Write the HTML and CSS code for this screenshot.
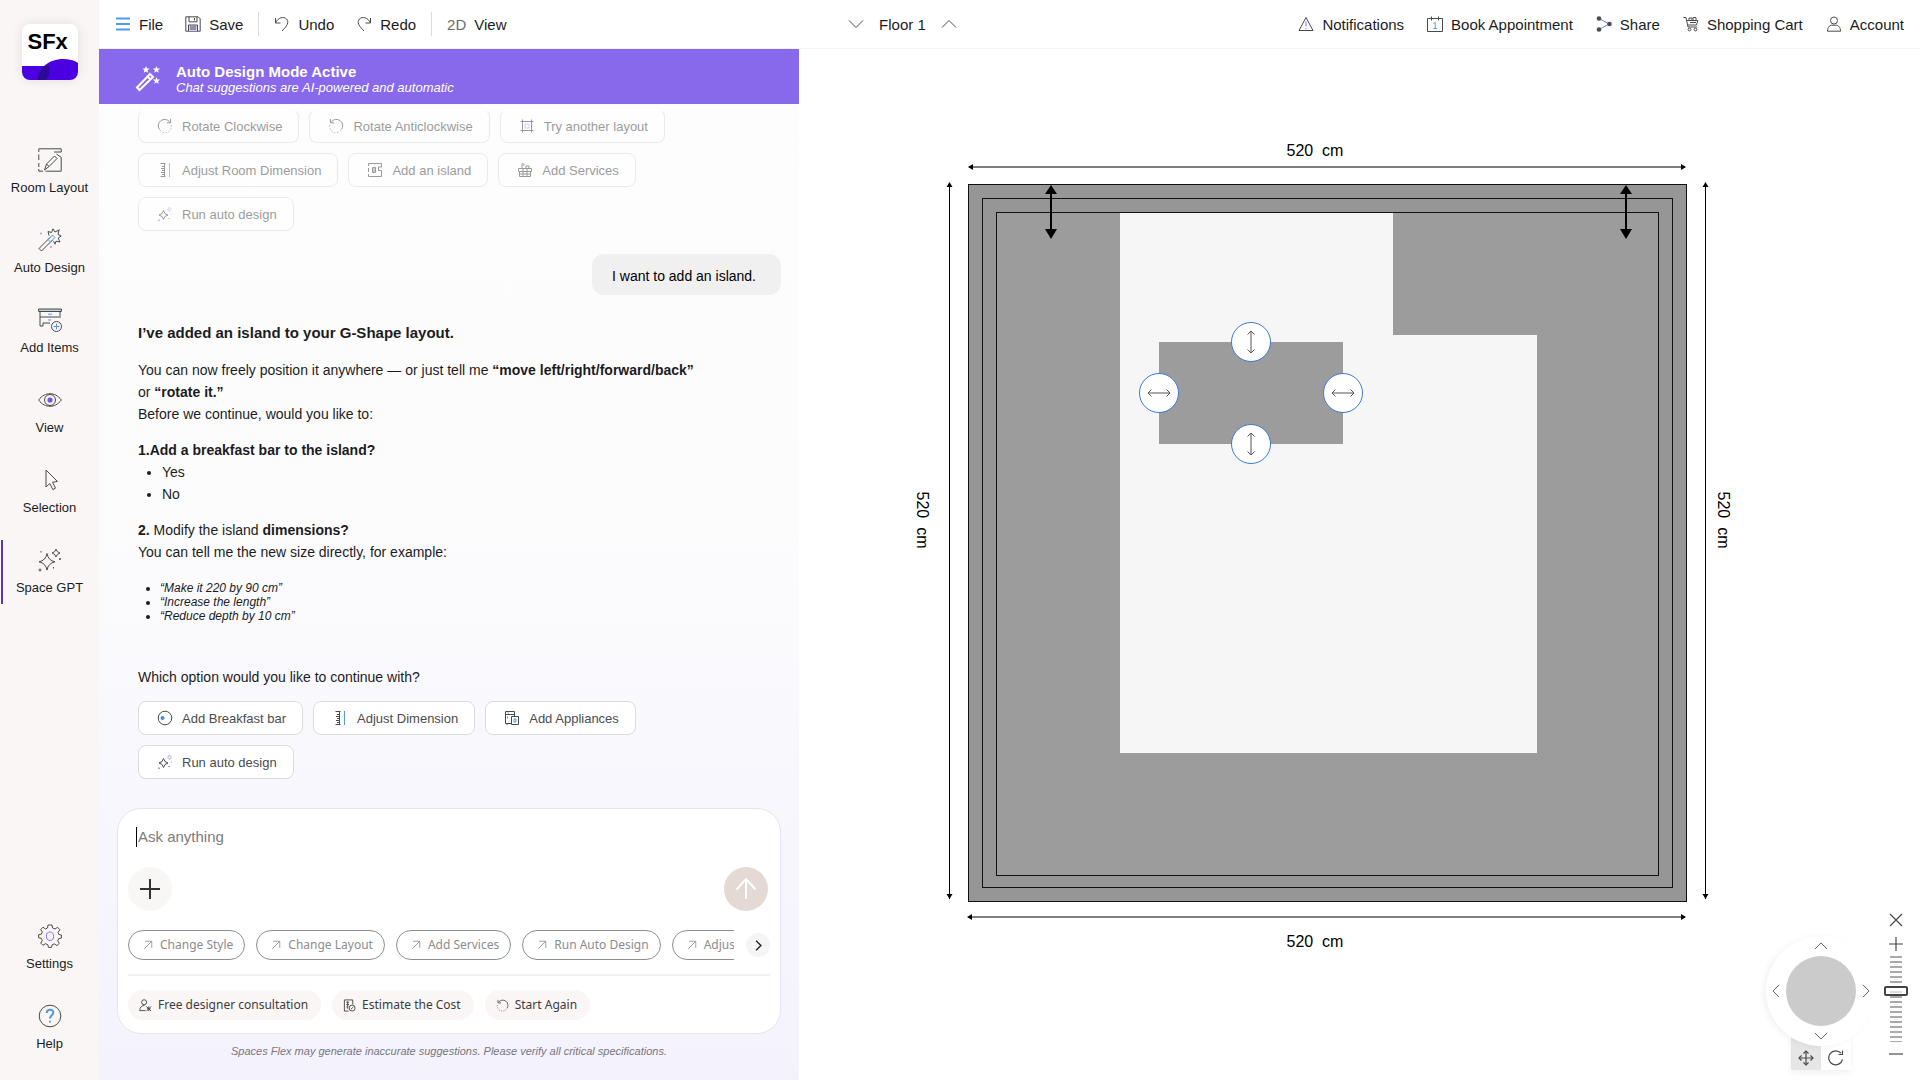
FILE: index.html
```html
<!DOCTYPE html>
<html lang="en">
<head>
<meta charset="utf-8">
<meta name="viewport" content="width=device-width, initial-scale=1">
<title>Spaces Flex – Space GPT</title>
<link rel="stylesheet" href="styles.css">
</head>
<body>
<svg class="sprite" aria-hidden="true">
  <symbol id="i-rot-cw" viewBox="0 0 16 16"><path d="M2.5 11.5A6.3 6.3 0 0 1 12.8 4"/><path d="M13.6 1v3.8H9.8"/><path d="M14.3 7.5A6.3 6.3 0 0 1 3 12.2" stroke-dasharray="1 2"/></symbol>
  <symbol id="i-rot-ccw" viewBox="0 0 16 16"><path d="M13.5 11.5A6.3 6.3 0 0 0 3.2 4"/><path d="M2.4 1v3.8h3.8"/><path d="M1.7 7.5A6.3 6.3 0 0 0 13 12.2" stroke-dasharray="1 2"/></symbol>
  <symbol id="i-frame" viewBox="0 0 16 16"><path d="M3.5 1.5v13M12.5 1.5v13M1.5 3.5h13M1.5 12.5h13"/><path class="lilac" d="M6 6h4v4H6z"/></symbol>
  <symbol id="i-ruler" viewBox="0 0 16 16"><path d="M3.5 1.5h5M3.5 14.5h5M7.500 1.5v13M5 4.500h3M4 6.500h4M5 8.500h3M4 10.500h4M5 12.500h3"/><path class="blue" d="M12.500 1v14"/></symbol>
  <symbol id="i-island" viewBox="0 0 16 16"><path d="M1.5 4V1.5h13V5h-3v3.5h3v6h-13V12M1.5 6v4"/><path d="M5.5 5.5h3v5h-3zM7 5.500v5"/></symbol>
  <symbol id="i-gift" viewBox="0 0 16 16"><path d="M1.500 6.500h13v3h-13zM2.500 9.500h11v5h-11zM6 6.500v8M10 6.500v8M2.500 12h11M5 6V2.500a1 1 0 0 1 2 0V4M9 6V4h3v2"/></symbol>
  <symbol id="i-spark" viewBox="0 0 16 16"><path d="M6.500 4.500Q7.200 8.300 11 9 7.200 9.700 6.500 13.500 5.800 9.700 2 9 5.800 8.300 6.500 4.500z"/><path class="lilac" d="M12.500 1q.4 1.900 2 2.300-1.600.4-2 2.300-.4-1.900-2-2.300 1.600-.4 2-2.300zM14.500 7.500v1"/><path d="M2 13.500v1.500M12 12v1"/></symbol>
  <symbol id="i-bar" viewBox="0 0 16 16"><circle cx="8" cy="8" r="6.800"/><circle class="bluefill" cx="5.500" cy="8" r="2"/></symbol>
  <symbol id="i-appl" viewBox="0 0 16 16"><path d="M7 13.500H1.500V1.500h9V6M1.500 4.500h9M3 13v2"/><path d="M7.500 6.500h7v8h-7z"/><path class="blue" d="M3.500 3h1.500M3.500 6.500v2M10 9h2v3h-2z"/></symbol>
  <symbol id="i-ne" viewBox="0 0 12 12"><path d="M1.500 10.500l9-9M2.500 1.500h8v8"/></symbol>
  <symbol id="i-warn" viewBox="0 0 16 16"><path d="M8 1.500l7 13H1z"/><path class="violet" d="M8 5.500v5M8 12v1.200"/></symbol>
  <symbol id="i-cal" viewBox="0 0 16 16"><path d="M.5 2.500h15v13H.500zM4.500 .500v4M11.500 .500v4"/><path class="blue" d="M6.500 7.500l1.700-1v6M6.300 12.500h3.700"/></symbol>
  <symbol id="i-share" viewBox="0 0 16 16"><path class="violet" d="M3 2.500l10 5.500"/><path class="blue" d="M13 8L3 13.500"/><g class="dots"><circle cx="3" cy="2.500" r="2.300"/><circle cx="13.500" cy="8" r="2.300"/><circle cx="3" cy="13.500" r="2.300"/></g></symbol>
  <symbol id="i-cart" viewBox="0 0 16 16"><path d="M.5 1.500h2.500l2 9.500h9M3.800 4.500h11L13.500 9H4.800M6 4V2h3v2M10 4V1.500h3V4M7 6.500h6"/><circle cx="6.500" cy="13.500" r="1.400"/><circle cx="12.500" cy="13.500" r="1.400"/></symbol>
  <symbol id="i-user" viewBox="0 0 16 16"><circle cx="8" cy="4.500" r="3.500"/><path d="M1.500 15.200c0-4 2-5.700 4.200-6h4.600c2.200.3 4.200 2 4.200 6z"/></symbol>
  <symbol id="i-save" viewBox="0 0 16 16"><path d="M.8 .8h12.400l2 2v12.400H.800z"/><path class="lilacfill" d="M3.500 9h9v6h-9z"/><path d="M3.500 15V9h9v6M4 .8v5h8v-5M9.500 2v2.500M5 11h6M5 13h6"/></symbol>
  <symbol id="i-undo" viewBox="0 0 16 16"><path d="M1.500 2v5h5M1.500 7C4 1.500 9.500 0 12.500 3c3 3.300.5 7-4.500 12"/></symbol>
  <symbol id="i-redo" viewBox="0 0 16 16"><path d="M14.500 2v5h-5M14.500 7C12 1.500 6.500 0 3.500 3c-3 3.300-.5 7 4.500 12"/></symbol>
  <symbol id="i-down" viewBox="0 0 16 16"><path d="M1 4.500l7 7 7-7"/></symbol>
  <symbol id="i-up" viewBox="0 0 16 16"><path d="M1 11.500l7-7 7 7"/></symbol>
  <symbol id="i-left" viewBox="0 0 16 16"><path d="M11.500 1l-7 7 7 7"/></symbol>
  <symbol id="i-right" viewBox="0 0 16 16"><path d="M4.500 1l7 7-7 7"/></symbol>
  <symbol id="i-ns" viewBox="0 0 24 24"><path d="M12 1v22M8.500 4.500L12 1l3.500 3.500M8.500 19.500L12 23l3.500-3.500"/></symbol>
  <symbol id="i-ew" viewBox="0 0 24 24"><path d="M1 12h22M4.500 8.500L1 12l3.500 3.500M19.500 8.500L23 12l-3.500 3.500"/></symbol>
</svg>

<div class="app">
  <nav class="rail" aria-label="Tools">
    <a class="logo" href="#" aria-label="SFx home">
      <svg viewBox="0 0 56 56" aria-hidden="true"><path fill="#4a00e0" d="M0 42h22c6-5 12-7 19-7 6 0 11 1 15 4v17H0z"/><path fill="#2c0a96" d="M22 42h5c1 5 0 10-3 14h-8c0-6 2-10 6-14z"/></svg>
      <span class="logo-text">SFx</span>
    </a>
    <div class="rail-main">
      <a class="rail-item" href="#"><svg class="ic24" viewBox="0 0 24 24"><path d="M.8 4V.800h22.400V4H16M.800 6.500V12M.800 15v4M.800 21v2.200H5M7.500 23.200h15.700V9.500L18.500 6"/><path d="M6.500 22l2-6 8-8 2.500 2.500-8 8zM8.500 16l2.500 2.500"/></svg>Room Layout</a>
      <a class="rail-item" href="#"><svg class="ic24" viewBox="0 0 24 24"><path d="M12 9.500L1 20.500 3.500 23 14.500 12"/><path class="blue" d="M10 11.500l4.500-4.500 2.500 2.500-4.500 4.500z"/><path d="M11 7.500l-1-4 3.500 1L15 .800l2 3.200 4-2-1 4.500 3.200 1.500-3 2 1.800 4-4-.8-1 3-1.500-3"/><path class="pink" d="M3 4.500v2M2 5.500h2M21.500 1v2M13 18v2M12 19h2"/></svg>Auto Design</a>
      <a class="rail-item" href="#"><svg class="ic24" viewBox="0 0 24 24"><path fill="#b9d2dc" d="M.6 1h22.800v2.500H.600z"/><path d="M2 3.500V18h3v-3h7M22 3.500V10M2 9h19"/><path class="blue" d="M10 6.200h4M10 12h3M18.500 15.500v6M15.500 18.500h6"/><circle cx="18.500" cy="18.500" r="5"/></svg>Add Items</a>
      <a class="rail-item" href="#"><svg class="ic24" viewBox="0 0 24 24"><path d="M.6 12C4 7.500 8 5.700 12 5.700S20 7.500 23.400 12C20 16.500 16 18.300 12 18.300S4 16.500.600 12z"/><circle cx="12" cy="12" r="5.500"/><circle cx="12" cy="12" r="2.600" fill="#6a5be0" stroke="none"/></svg>View</a>
      <a class="rail-item" href="#"><svg class="ic24" viewBox="0 0 24 24"><path d="M8 2v17l3.800-3.500 3 6 2.700-1.300-3-6L19.500 13.500z"/></svg>Selection</a>
      <a class="rail-item rail-item-active" href="#" aria-current="page"><svg class="ic24" viewBox="0 0 24 24"><path d="M9 5.500q1.200 7 8 8.300-6.800 1.300-8 8.300-1.200-7-8-8.300 6.800-1.300 8-8.300zM18 1q.7 3.300 4 4-3.300.7-4 4-.7-3.300-4-4 3.300-.7 4-4z"/><path d="M3 3v1.500M22 10v2M21 11h2M2 20.500v3M.5 22h3M15.500 19v1.500"/></svg>Space GPT</a>
    </div>
    <div class="rail-foot">
      <a class="rail-item" href="#"><svg class="ic24" viewBox="0 0 24 24"><path d="M10 1h4l.6 3 2.400 1 2.600-1.700 2.200 2.400L20 8.500l.9 2 2.500.5v3l-2.700.6-1 2.200 1.600 2.600-2.300 2.200-2.600-1.700-2.300 1L13.500 23.400h-3l-.7-2.700-2.300-1-2.600 1.600-2.200-2.200 1.600-2.600-1-2.200L.6 13.800v-3l2.800-.6.9-2.200L2.700 5.500 5 3.200 7.500 5l2-1z"/><ellipse class="violet" cx="12" cy="12.200" rx="3.600" ry="4.200"/></svg>Settings</a>
      <a class="rail-item" href="#"><svg class="ic24" viewBox="0 0 24 24"><circle cx="12" cy="12" r="10.800"/><path class="blue thick" d="M8.800 9c0-4.500 6.500-4.300 6.500-.5 0 3-3.300 3-3.300 6M12 16.800v1.800"/></svg>Help</a>
    </div>
  </nav>

  <header class="topbar">
    <div class="bar-group">
      <button class="bar-btn"><svg class="ic16" viewBox="0 0 16 16"><path class="blue thick" d="M1 2.500h14M1 8h14M1 13.500h14"/></svg>File</button>
      <button class="bar-btn"><svg class="ic16"><use href="#i-save"/></svg>Save</button>
      <span class="bar-sep"></span>
      <button class="bar-btn"><svg class="ic16"><use href="#i-undo"/></svg>Undo</button>
      <button class="bar-btn"><svg class="ic16"><use href="#i-redo"/></svg>Redo</button>
      <span class="bar-sep"></span>
      <button class="bar-btn"><span class="mode">2D</span>View</button>
    </div>
    <div class="floors">
      <button class="bar-btn" aria-label="Floor down"><svg class="ic16"><use href="#i-down"/></svg></button>
      <span>Floor 1</span>
      <button class="bar-btn" aria-label="Floor up"><svg class="ic16"><use href="#i-up"/></svg></button>
    </div>
    <div class="bar-group bar-group-end">
      <button class="bar-btn"><svg class="ic16"><use href="#i-warn"/></svg>Notifications</button>
      <button class="bar-btn"><svg class="ic16"><use href="#i-cal"/></svg>Book Appointment</button>
      <button class="bar-btn"><svg class="ic16"><use href="#i-share"/></svg>Share</button>
      <button class="bar-btn"><svg class="ic16"><use href="#i-cart"/></svg>Shopping Cart</button>
      <button class="bar-btn"><svg class="ic16"><use href="#i-user"/></svg>Account</button>
    </div>
  </header>

  <section class="chat" aria-label="Space GPT">
    <div class="banner">
      <svg class="banner-icon" viewBox="0 0 26 26"><path d="M15 8L2 21.500 4.500 24 18 11z"/><path d="M12.500 10.500l3 3"/><g class="stars"><path d="M11 0l1 2.400 2.600.2-2 1.700.6 2.500L11 5.400 8.800 6.800l.6-2.500-2-1.700 2.600-.2z"/><path d="M21.500 0l1 2.400 2.600.2-2 1.700.6 2.500-2.200-1.400-2.200 1.400.6-2.500-2-1.700 2.600-.2z"/><path d="M21.500 11l1 2.400 2.600.2-2 1.700.6 2.500-2.200-1.400-2.200 1.400.6-2.500-2-1.700 2.600-.2z"/></g></svg>
      <div>
        <h1>Auto Design Mode Active</h1>
        <p>Chat suggestions are AI-powered and automatic</p>
      </div>
    </div>

    <div class="thread">
      <div class="chips chips-past">
        <button class="chip"><svg class="ic16"><use href="#i-rot-cw"/></svg>Rotate Clockwise</button>
        <button class="chip"><svg class="ic16"><use href="#i-rot-ccw"/></svg>Rotate Anticlockwise</button>
        <button class="chip"><svg class="ic16"><use href="#i-frame"/></svg>Try another layout</button>
        <button class="chip"><svg class="ic16"><use href="#i-ruler"/></svg>Adjust Room Dimension</button>
        <button class="chip"><svg class="ic16"><use href="#i-island"/></svg>Add an island</button>
        <button class="chip"><svg class="ic16"><use href="#i-gift"/></svg>Add Services</button>
        <button class="chip"><svg class="ic16"><use href="#i-spark"/></svg>Run auto design</button>
      </div>
      <p class="bubble">I want to add an island.</p>
      <article class="reply">
        <h2>I’ve added an island to your G-Shape layout.</h2>
        <p>You can now freely position it anywhere — or just tell me <b>“move left/right/forward/back”</b><br>or <b>“rotate it.”</b><br>Before we continue, would you like to:</p>
        <p class="next"><b>1.Add a breakfast bar to the island?</b></p>
        <ul>
          <li>Yes</li>
          <li>No</li>
        </ul>
        <p class="next"><b>2.</b> Modify the island <b>dimensions?</b><br>You can tell me the new size directly, for example:</p>
        <ul class="examples">
          <li>“Make it 220 by 90 cm”</li>
          <li>“Increase the length”</li>
          <li>“Reduce depth by 10 cm”</li>
        </ul>
        <p class="question">Which option would you like to continue with?</p>
      </article>
      <div class="chips">
        <button class="chip"><svg class="ic16"><use href="#i-bar"/></svg>Add Breakfast bar</button>
        <button class="chip"><svg class="ic16"><use href="#i-ruler"/></svg>Adjust Dimension</button>
        <button class="chip"><svg class="ic16"><use href="#i-appl"/></svg>Add Appliances</button>
        <button class="chip"><svg class="ic16"><use href="#i-spark"/></svg>Run auto design</button>
      </div>
    </div>

    <form class="composer">
      <label class="field"><span class="caret"></span><input type="text" placeholder="Ask anything" aria-label="Ask anything"></label>
      <div class="composer-row">
        <button type="button" class="round" aria-label="Attach"><svg viewBox="0 0 22 22"><path d="M11 1v20M1 11h20"/></svg></button>
        <button type="button" class="round send" aria-label="Send"><svg viewBox="0 0 22 22"><path d="M11 1v20M1.500 11.500L11 1l9.500 10.500"/></svg></button>
      </div>
      <div class="pill-row">
        <div class="pills">
          <button type="button" class="pill"><svg><use href="#i-ne"/></svg>Change Style</button>
          <button type="button" class="pill"><svg><use href="#i-ne"/></svg>Change Layout</button>
          <button type="button" class="pill"><svg><use href="#i-ne"/></svg>Add Services</button>
          <button type="button" class="pill"><svg><use href="#i-ne"/></svg>Run Auto Design</button>
          <button type="button" class="pill"><svg><use href="#i-ne"/></svg>Adjust Dimension</button>
        </div>
        <button type="button" class="more" aria-label="More suggestions"><svg><use href="#i-right"/></svg></button>
      </div>
      <div class="actions">
        <button type="button" class="action"><svg viewBox="0 0 14 14"><circle cx="5.500" cy="3.500" r="2.700"/><path d="M7 12.500H.800c0-3.500 2-5.500 5-5.500M8 8l5 5M13 8l-5 5M8.500 10.500h4M10.500 8v5"/></svg>Free designer consultation</button>
        <button type="button" class="action"><svg viewBox="0 0 14 14"><path d="M6 13H1.500V1h9v5M3.500 3.500h3M3.500 6h3M3.500 8.500h1.500M5 2.500v8"/><circle cx="9.800" cy="9.800" r="3.200"/><path d="M8.500 11l2.600-2.400"/></svg>Estimate the Cost</button>
        <button type="button" class="action"><svg><use href="#i-rot-ccw"/></svg>Start Again</button>
      </div>
    </form>
    <p class="note">Spaces Flex may generate inaccurate suggestions. Please verify all critical specifications.</p>
  </section>

  <main class="canvas">
    <div class="plan">
      <svg class="plan-art" viewBox="915 140 820 815" role="img" aria-label="Room plan, 520 by 520 cm">
        <rect x="968" y="184" width="719" height="718" fill="#969696"/>
        <rect x="996" y="212" width="663" height="664" fill="#9c9c9c"/>
        <path fill="#f6f6f6" d="M1120 212h273v123h144v418h-417z"/>
        <rect x="1159" y="342" width="184" height="102" fill="#9c9c9c"/>
        <g fill="none" stroke="#111" shape-rendering="crispEdges">
          <rect x="968.500" y="184.500" width="718" height="717"/>
          <rect x="982.500" y="198.500" width="690" height="689"/>
          <rect x="996.500" y="212.500" width="662" height="663"/>
        </g>
        <g stroke="#000" fill="#000">
          <path d="M969 167h716M969 917h716M949.500 183v716M1705.500 183v716" fill="none"/>
          <path stroke="none" d="M968 167l5-3v6zM1686 167l-5-3v6zM967 917l5-3v6zM1686 917l-5-3v6zM949.500 182l-3 5h6zM949.500 899l-3-5h6zM1705.500 182l-3 5h6zM1705.500 899l-3-5h6z"/>
          <path stroke-width="2" d="M1051 192v40M1626 192v40"/>
          <path stroke="none" d="M1051 185l-6 9h12zM1051 239l-6-10h12zM1626 185l-6 9h12zM1626 239l-6-10h12z"/>
        </g>
        <g class="dim" text-anchor="middle">
          <text x="1315" y="156">520&#160; cm</text>
          <text x="1315" y="947">520&#160; cm</text>
          <text transform="translate(917 520) rotate(90)">520&#160; cm</text>
          <text transform="translate(1718 520) rotate(90)">520&#160; cm</text>
        </g>
      </svg>
      <button class="handle handle-n" aria-label="Resize from back"><svg><use href="#i-ns"/></svg></button>
      <button class="handle handle-s" aria-label="Resize from front"><svg><use href="#i-ns"/></svg></button>
      <button class="handle handle-w" aria-label="Resize from left"><svg><use href="#i-ew"/></svg></button>
      <button class="handle handle-e" aria-label="Resize from right"><svg><use href="#i-ew"/></svg></button>
    </div>

    <div class="view-controls">
      <div class="pan">
        <div class="dial">
          <button class="dial-up" aria-label="Pan up"><svg><use href="#i-up"/></svg></button>
          <button class="dial-left" aria-label="Pan left"><svg><use href="#i-left"/></svg></button>
          <span class="knob"></span>
          <button class="dial-right" aria-label="Pan right"><svg><use href="#i-right"/></svg></button>
          <button class="dial-down" aria-label="Pan down"><svg><use href="#i-down"/></svg></button>
        </div>
        <div class="modes">
          <button class="mode-btn mode-on" aria-label="Move"><svg viewBox="0 0 16 16"><path d="M8 1v14M1 8h14"/><path d="M5.500 3.500L8 1l2.500 2.500M5.500 12.500L8 15l2.500-2.500M3.500 5.500L1 8l2.500 2.500M12.500 5.500L15 8l-2.500 2.500"/></svg></button>
          <button class="mode-btn" aria-label="Rotate"><svg viewBox="0 0 16 16"><path d="M14.500 9.500A7 7 0 1 1 13 3.200M14.500.500v4h-4"/></svg></button>
        </div>
      </div>
      <div class="zoom">
        <button class="zoom-close" aria-label="Close"><svg viewBox="0 0 14 14"><path d="M1 1l12 12M13 1L1 13"/></svg></button>
        <button aria-label="Zoom in"><svg viewBox="0 0 14 14"><path d="M7 0v14M0 7h14"/></svg></button>
        <input class="zoom-range" type="range" min="0" max="100" value="60" aria-label="Zoom">
        <button aria-label="Zoom out"><svg viewBox="0 0 14 14"><path d="M0 7h14"/></svg></button>
      </div>
    </div>
  </main>
</div>
</body>
</html>
```

FILE: styles.css
```css
* { box-sizing: border-box; }

body {
  margin: 0;
  font-family: "Liberation Sans", Arial, sans-serif;
  font-size: 14px;
  color: #1c1c1e;
  background: #fff;
}

h1, h2, p, ul { margin: 0; }
a { color: inherit; text-decoration: none; }

button {
  margin: 0;
  padding: 0;
  border: 0;
  background: none;
  font: inherit;
  color: inherit;
  cursor: pointer;
}

svg {
  display: block;
  fill: none;
  stroke: #4a4a4c;
  stroke-width: 1;
}

.sprite { position: absolute; width: 0; height: 0; }
.ic16 { width: 16px; height: 16px; flex: none; }
.ic24 { width: 24px; height: 24px; flex: none; }
.blue { stroke: #4f9bea; }
.violet { stroke: #8a6cf0; }
.lilac { stroke: #b9a8f5; }
.pink { stroke: #d48af0; }
.thick { stroke-width: 2; }
.bluefill { fill: #3f8ee8; stroke: none; }
.lilacfill { fill: #d9d3fb; stroke: none; }
.dots { fill: #4a4a55; stroke: none; }

.app {
  display: grid;
  grid-template-columns: 99px minmax(600px, 700fr) 1121fr;
  grid-template-rows: auto 1fr;
  min-height: 100vh;
}

/* Left rail */
.rail {
  grid-row: 1 / 3;
  display: flex;
  flex-direction: column;
  align-items: stretch;
  padding: 24px 0 20px;
  background: #f9f6f5;
}

.logo {
  display: grid;
  align-self: center;
  width: 56px;
  height: 56px;
  border-radius: 8px;
  overflow: hidden;
  background: #fff;
  box-shadow: 0 0 12px rgba(0, 0, 0, 0.1);
}
.logo > * { grid-area: 1 / 1; }
.logo svg { width: 56px; height: 56px; stroke: none; }
.logo-text {
  padding: 4px 0 0 6px;
  font: bold 22px/28px "Liberation Sans", Arial, sans-serif;
  color: #000;
}

.rail-main, .rail-foot { display: flex; flex-direction: column; gap: 16px; }
.rail-main { margin-top: 60px; }
.rail-foot { margin-top: auto; }

.rail-item {
  display: flex;
  flex-direction: column;
  align-items: center;
  gap: 8px;
  height: 64px;
  margin: 0 1px;
  padding-top: 8px;
  border-left: 2px solid transparent;
  border-right: 2px solid transparent;
  font-size: 13px;
  line-height: 16px;
}
.rail-item-active { border-left-color: #5a35c8; }

/* Top bar */
.topbar {
  grid-column: 2 / 4;
  display: flex;
  align-items: center;
  justify-content: space-between;
  height: 49px;
  padding: 0 16px;
  border-bottom: 1px solid #f3f3f3;
  font-size: 15px;
}
.bar-group { display: flex; align-items: center; gap: 22px; }
.bar-group-end { gap: 23px; }
.bar-btn { display: flex; align-items: center; gap: 8px; white-space: nowrap; }
.bar-sep { width: 1px; height: 24px; margin: 0 -7px; background: #ddd; }
.mode { color: #6b6b6d; }
.floors { display: flex; align-items: center; gap: 15px; }

/* Chat */
.chat {
  display: flex;
  flex-direction: column;
  background: linear-gradient(#fdfdfd 0, #fcfcfd 45%, #f4f2fd 100%);
}

.banner {
  display: flex;
  align-items: center;
  gap: 15px;
  height: 55px;
  padding: 4px 36px 0;
  background: #8869ec;
  color: #fff;
}
.banner-icon { width: 26px; height: 26px; stroke: #fff; stroke-width: 2; }
.stars { fill: #fff; stroke: none; }
.banner h1 { font-size: 15px; line-height: 18px; }
.banner p { font-size: 13px; line-height: 14px; font-style: italic; }

.thread { display: flex; flex-direction: column; padding: 5px 18px 0 39px; }

.chips { display: flex; flex-wrap: wrap; gap: 10px; max-width: 560px; }
.chips-past { opacity: 0.55; }
.chip {
  display: flex;
  align-items: center;
  gap: 9px;
  height: 34px;
  padding: 0 16px 0 18px;
  border: 1px solid #dcdcde;
  border-radius: 8px;
  background: #fff;
  color: #4c4c4e;
  font-size: 13px;
  white-space: nowrap;
}
.chips-past .chip:nth-child(-n+3) {
  border-top-color: transparent;
}

.bubble {
  align-self: flex-end;
  margin-top: 23px;
  padding: 13px 25px 10px 20px;
  border-radius: 12px;
  background: #f0f0f0;
  color: #000;
  line-height: 18px;
}

.reply { margin-top: 27px; line-height: 22px; }
.reply h2 { font-size: 15px; line-height: 22px; margin-bottom: 15px; }
.reply ul { padding-left: 24px; }
.reply .next { margin-top: 14px; }
.reply .examples {
  margin-top: 18px;
  padding-left: 22px;
  font-size: 12px;
  line-height: 14px;
  font-style: italic;
}
.reply .question { margin: 43px 0 13px; }

/* Composer */
.composer {
  margin: auto 18px 0;
  padding: 15px 10px 13px;
  border: 1px solid #e6e4ec;
  border-radius: 24px;
  background: #fff;
}
.field { display: flex; align-items: center; height: 26px; padding-left: 8px; }
.caret { width: 1px; height: 20px; margin-right: 1px; background: #000; }
.field input {
  flex: 1;
  padding: 0;
  border: 0;
  outline: 0;
  background: none;
  font: 15px/20px "Liberation Sans", Arial, sans-serif;
}
.field input::placeholder { color: #7c7c7e; opacity: 1; }

.composer-row { display: flex; justify-content: space-between; margin-top: 17px; }
.round {
  display: grid;
  place-items: center;
  width: 44px;
  height: 44px;
  border-radius: 50%;
  background: #f9f7f6;
}
.round svg { width: 22px; height: 22px; stroke: #333; stroke-width: 2; }
.send { margin-right: 2px; background: #e4dad3; }
.send svg { stroke: #fff; }

.pill-row {
  display: flex;
  align-items: center;
  gap: 12px;
  margin-top: 19px;
  padding-bottom: 14px;
  border-bottom: 2px solid #f2f1f1;
  font: 12px/18px "Noto Sans", sans-serif;
}
.pills { display: flex; flex: 1; gap: 11px; min-width: 0; overflow: hidden; }
.pill {
  display: flex;
  align-items: center;
  gap: 7px;
  flex: none;
  height: 30px;
  padding: 0 11px 0 14px;
  border: 1px solid #8f8f91;
  border-radius: 15px;
  color: #8c8c8e;
}
.pill svg { width: 10px; height: 10px; stroke: #8c8c8e; }
.more {
  display: grid;
  place-items: center;
  width: 24px;
  height: 24px;
  border-radius: 50%;
  background: #f6f5f5;
}
.more svg { width: 11px; height: 11px; stroke: #222; stroke-width: 2; }

.actions { display: flex; gap: 11px; margin-top: 14px; font: 12px/18px "Noto Sans", sans-serif; }
.action {
  display: flex;
  align-items: center;
  gap: 6px;
  height: 30px;
  padding: 0 13px 0 11px;
  border-radius: 15px;
  background: #f9f6f5;
  color: #3c3c3e;
}
.action svg { width: 13px; height: 13px; }

.note {
  padding: 10px 0 22px;
  font-size: 11px;
  line-height: 14px;
  font-style: italic;
  text-align: center;
  color: #77767c;
}

/* Canvas */
.canvas { position: relative; padding: 91px 20px 20px 116px; }
.plan { position: relative; width: 100%; max-width: 820px; }
.plan-art { width: 100%; stroke: none; }
.dim { font-size: 16px; fill: #000; }

.handle {
  position: absolute;
  display: grid;
  place-items: center;
  width: 40px;
  height: 40px;
  margin: -20px 0 0 -20px;
  border: 1px solid #3b78d8;
  border-radius: 50%;
  background: #fff;
}
.handle svg { width: 24px; height: 24px; stroke: #555; }
.handle-n { left: 41%; top: 24.800%; }
.handle-s { left: 41%; top: 37.300%; }
.handle-w { left: 29.800%; top: 31%; }
.handle-e { left: 52.200%; top: 31%; }

.view-controls {
  position: absolute;
  right: 12px;
  bottom: 10px;
  display: flex;
  align-items: flex-end;
  gap: 8px;
}
.pan { display: flex; flex-direction: column; align-items: center; }
.dial {
  z-index: 1;
  display: grid;
  grid-template-columns: 20px 70px 20px;
  grid-template-rows: 20px 70px 20px;
  place-items: center;
  border-radius: 50%;
  background: #fff;
  box-shadow: -3px 1px 6px rgba(0, 0, 0, 0.05);
}
.dial svg { width: 14px; height: 14px; }
.knob { grid-area: 2 / 2; width: 70px; height: 70px; border-radius: 50%; background: #cbcbcb; }
.dial-up { grid-area: 1 / 2; }
.dial-left { grid-area: 2 / 1; }
.dial-right { grid-area: 2 / 3; }
.dial-down { grid-area: 3 / 2; }
.modes { display: flex; margin-top: -10px; box-shadow: 0 3px 6px rgba(0, 0, 0, 0.06); }
.mode-btn {
  display: grid;
  place-items: end center;
  width: 30px;
  height: 34px;
  padding-bottom: 4px;
  background: #fff;
}
.mode-btn svg { width: 16px; height: 16px; stroke-width: 1.200; }
.mode-on { background: #e6e6e6; }

.zoom { display: flex; flex-direction: column; align-items: center; gap: 5px; padding-bottom: 9px; }
.zoom svg { width: 14px; height: 14px; stroke-width: 1.200; }
.zoom-close { margin-bottom: 5px; }
.zoom-range {
  appearance: none;
  writing-mode: vertical-lr;
  direction: rtl;
  width: 24px;
  height: 86px;
  margin: 0;
  background: repeating-linear-gradient(#aaa 0 2px, transparent 2px 5px) center / 12px 86px no-repeat;
}
.zoom-range::-webkit-slider-thumb {
  appearance: none;
  width: 24px;
  height: 10px;
  border: 2px solid #444;
  border-radius: 2px;
  background: rgba(255, 255, 255, 0.6);
}
```
